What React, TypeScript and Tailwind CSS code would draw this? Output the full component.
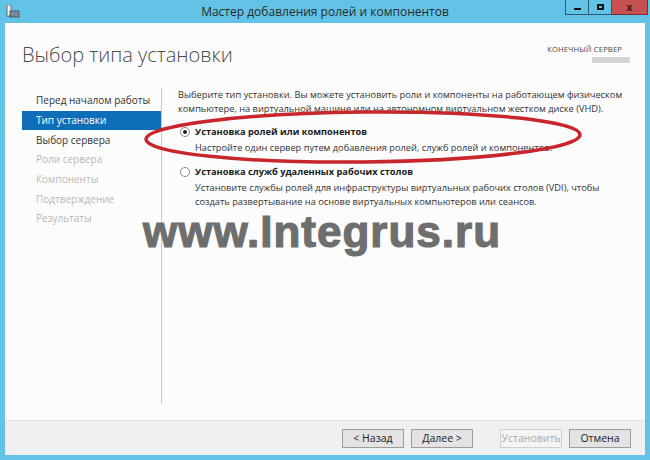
import React from 'react';

const STEPS = [
  { label: 'Перед началом работы', state: 'done' },
  { label: 'Тип установки', state: 'active' },
  { label: 'Выбор сервера', state: 'done' },
  { label: 'Роли сервера', state: 'off' },
  { label: 'Компоненты', state: 'off' },
  { label: 'Подтверждение', state: 'off' },
  { label: 'Результаты', state: 'off' },
];

const font = { fontFamily: '"Open Sans", "Noto Sans", sans-serif' };

const Radio = ({ checked }: { checked: boolean }) => (
  <span className="w-[10px] h-[10px] rounded-full border border-[#8a8a8a] bg-white flex items-center justify-center shrink-0">
    {checked && <span className="w-[4px] h-[4px] rounded-full bg-[#222]" />}
  </span>
);

const Button = ({ label, disabled }: { label: string; disabled?: boolean }) => (
  <button
    className={`w-[62px] h-[19px] border text-[10.5px] leading-none flex items-center justify-center ${
      disabled ? 'border-[#d0d0d0] bg-[#f4f4f4] text-[#a8a8a8]' : 'border-[#9c9c9c] bg-[#e3e3e3] text-[#222]'
    }`}
  >
    {label}
  </button>
);

export default function App() {
  return (
    <div
      className="relative w-[650px] h-[460px] bg-[#62c3e6] flex flex-col overflow-hidden"
      style={font}
    >
      {/* TITLE BAR */}
      <div className="relative h-[23px] shrink-0 flex items-center justify-center">
        <svg className="absolute left-[6px] top-[5px]" width="14" height="13" viewBox="0 0 14 13">
          <rect x="1" y="0" width="4" height="11" fill="#f4f4f4" stroke="#555" strokeWidth="0.8" />
          <rect x="4" y="6" width="9" height="6" fill="#7a8a96" stroke="#444" strokeWidth="0.8" />
        </svg>
        <span className="text-[12px] text-[#2a2a2a]">Мастер добавления ролей и компонентов</span>
        <div className="absolute right-[2px] top-0 flex h-[15px]">
          <div className="w-[24px] h-full border border-[#2a5a70] border-t-0 flex items-end justify-center pb-[4px]">
            <span className="w-[7px] h-[2px] bg-[#111]" />
          </div>
          <div className="w-[23px] h-full border border-[#2a5a70] border-t-0 border-l-0 flex items-center justify-center">
            <span className="w-[7px] h-[6px] border-2 border-[#111]" />
          </div>
          <div className="w-[36px] h-full bg-[#c75050] border border-[#7a3030] border-t-0 border-l-0 flex items-center justify-center text-[10px] font-bold text-[#3a1a1a]">
            x
          </div>
        </div>
      </div>

      {/* WINDOW BODY */}
      <div className="flex-1 mx-[5px] mb-[5px] bg-[#fcfcfc] flex flex-col">
        <div className="h-[65px] shrink-0 flex justify-between pl-[17px] pr-[23px]">
          <h1 className="text-[20px] font-light text-[#4b4b4b] pt-[19px] leading-[26px]">Выбор типа установки</h1>
          <div className="pt-[21px] flex flex-col items-end">
            <span className="text-[7.5px] tracking-[0.2px] text-[#444] leading-[10px]">КОНЕЧНЫЙ СЕРВЕР</span>
            <span className="mt-[3px] -mr-[8px] w-[38px] h-[6px] bg-[#d4d4d4]" />
          </div>
        </div>

        <div className="flex-1 flex pb-[16px]">
          {/* STEPS */}
          <nav className="w-[157px] shrink-0 pl-[17px] pt-[3px] border-r border-[#c8c8c8] flex flex-col">
            {STEPS.map((s) => (
              <div
                key={s.label}
                className={`h-[19.7px] pl-[14px] flex items-center text-[10px] ${
                  s.state === 'active'
                    ? 'bg-[#0f6eb8] text-white'
                    : s.state === 'done'
                    ? 'text-[#333]'
                    : 'text-[#b9b9b9]'
                }`}
              >
                {s.label}
              </div>
            ))}
          </nav>

          {/* OPTIONS */}
          <main className="flex-1 pl-[16px] text-[#333] text-[9.25px] leading-[14px] whitespace-nowrap">
            <p>
              Выберите тип установки. Вы можете установить роли и компоненты на работающем физическом
              <br />
              компьютере, на виртуальной машине или на автономном виртуальном жестком диске (VHD).
            </p>
            <div className="mt-[9px] flex items-center gap-[5px] pl-[2px]">
              <Radio checked />
              <span className="font-bold text-[#1a1a1a]">Установка ролей или компонентов</span>
            </div>
            <p className="pl-[17px] mt-[2px]">Настройте один сервер путем добавления ролей, служб ролей и компонентов.</p>
            <div className="mt-[10px] flex items-center gap-[5px] pl-[2px]">
              <Radio checked={false} />
              <span className="font-bold text-[#1a1a1a]">Установка служб удаленных рабочих столов</span>
            </div>
            <p className="pl-[17px] mt-[2px]">
              Установите службы ролей для инфраструктуры виртуальных рабочих столов (VDI), чтобы
              <br />
              создать развертывание на основе виртуальных компьютеров или сеансов.
            </p>
          </main>
        </div>

        {/* FOOTER */}
        <div className="h-[35px] shrink-0 bg-[#f0f0f0] border-t border-[#e2e2e2] flex items-center justify-end pr-[14px]">
          <Button label="< Назад" />
          <span className="w-[7px]" />
          <Button label="Далее >" />
          <span className="w-[27px]" />
          <Button label="Установить" disabled />
          <span className="w-[7px]" />
          <Button label="Отмена" />
        </div>
      </div>

      {/* RED MARKER */}
      <svg className="absolute left-0 top-0 pointer-events-none" width="650" height="460">
        <ellipse cx="363" cy="137" rx="217" ry="25" fill="none" stroke="#c9262c" strokeWidth="3.5" transform="rotate(-0.6 363 137)" />
      </svg>

      {/* WATERMARK */}
      <div
        className="absolute left-[143px] top-[210px] text-[44px] font-bold text-[#6e6e6e] leading-none tracking-[1px] [-webkit-text-stroke:1.2px_#6e6e6e]"
        style={{ fontFamily: '"Liberation Sans", Arial, sans-serif' }}
      >
        www.Integrus.ru
      </div>
    </div>
  );
}
